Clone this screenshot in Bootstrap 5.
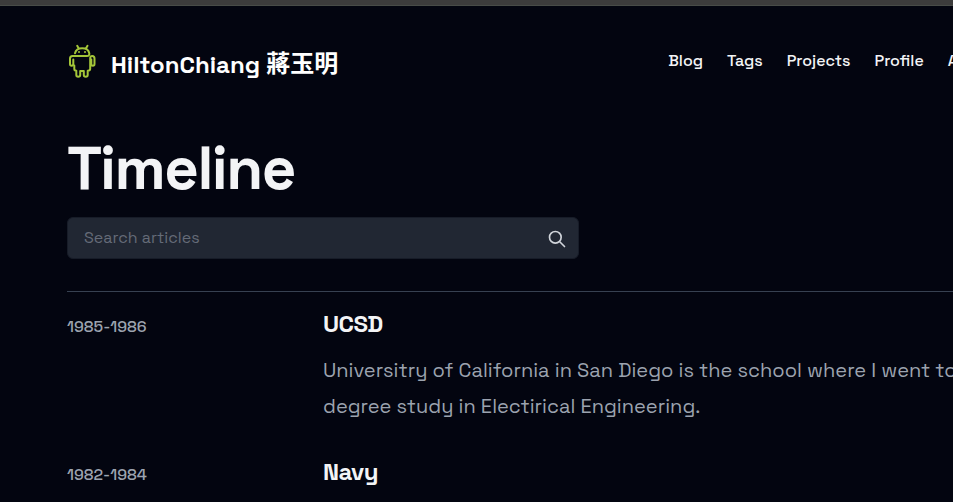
<!DOCTYPE html>
<html lang="en" data-bs-theme="dark">
<head>
<meta charset="utf-8">
<meta name="viewport" content="width=device-width, initial-scale=1">
<title>Timeline</title>
<link href="https://cdn.jsdelivr.net/npm/bootstrap@5.3.0/dist/css/bootstrap.min.css" rel="stylesheet">
<style>
html, body { height: 100%; }
body { background: #030510; color: #f3f4f6; font-family: "Space Grotesk", Inter, "Noto Sans CJK TC", sans-serif; overflow: hidden; }
.top-strip { height: 6px; background: #3c3c3c; border-bottom: 1px solid #484c48; }
.page { width: 1024px; margin-left: 67px; }
.site-header { height: 117px; }
.site-name { font-size: 24px; font-weight: 600; line-height: 32px; margin: 43px 0 0 15px; color: #fff; white-space: nowrap; width: 228px; }
.site-name .han { font-family: "Noto Sans CJK TC", sans-serif; font-size: 24px; font-weight: 700; line-height: 1; vertical-align: 1px; }
.bot { margin: 37px 0 0 1px; }
.site-nav { gap: 24px; margin: 43px 0 0 329.2px; }
.site-nav a { font-size: 16px; font-weight: 500; line-height: 24px; color: #f3f4f6; white-space: nowrap; }
.page-title { font-size: 60px; font-weight: 700; letter-spacing: -1.5px; line-height: 56px; margin: 18px 0 0; color: #f3f4f6; }
.search { width: 512px; height: 42px; margin-top: 20px; background: #212733; border: 1px solid #171c28; border-radius: 6px; padding: 0 11px 0 16px; }
.search input { background: none; border: 0; outline: 0; padding: 0; font-size: 16px; color: #f3f4f6; }
.search input::placeholder { color: #656b78; opacity: 1; }
.search svg { margin-top: 2px; }
.entries { border-top: 1px solid #374151; margin-top: 32px; }
.entry { height: 148px; padding-top: 16px; }
.entry-date { width: 256px; font-size: 16px; font-weight: 500; line-height: 24px; padding-top: 7px; color: #9ca3af; }
.entry-title { font-size: 24px; font-weight: 700; letter-spacing: -.6px; line-height: 32px; margin: 0 0 12px; color: #f3f4f6; }
.entry-text { font-size: 20px; line-height: 36px; color: #9ca3af; margin: 0; white-space: nowrap; }
</style>
</head>
<body>
<div class="top-strip"></div>
<div class="page">
  <header class="site-header d-flex align-items-start">
    <svg class="bot flex-shrink-0" width="28" height="36" viewBox="0 0 28 36" fill="none" stroke="#a4c639" stroke-width="2" stroke-linecap="round" stroke-linejoin="round">
      <path d="M9.200 2.800l1.300 2.200M19.500 2.800l-1.300 2.200M7 10.300C7.700 7 10.500 5.200 14.200 5.200s6.500 1.800 7.100 5.100c.2 1.700-.7 2.700-2.300 2.700H4.500c-1.600 0-2.500.9-2.500 2.500v5.500c0 2.400 3.300 2.400 3.300 0V16.500"/>
      <path d="M6.300 22.500v3.500c0 1.200.7 1.800 2 1.800V32c0 2.200 3.900 2.200 3.900 0V28h3.600v4c0 2.200 3.900 2.200 3.900 0v-4.200c1.700 0 2.500-.7 2.500-2V15c0-1.300.8-2 2-2 1.500 0 2.300.9 2.300 2.500V21c0 2.400-3.200 2.400-3.200 0v-4.500"/>
      <circle cx="11" cy="9" r="1" fill="#a4c639" stroke="none"/><circle cx="17" cy="9" r="1" fill="#a4c639" stroke="none"/>
    </svg>
    <div class="site-name">HiltonChiang <span class="han">蔣玉明</span></div>
    <nav class="site-nav d-flex">
      <a class="text-decoration-none" href="#">Blog</a>
      <a class="text-decoration-none" href="#">Tags</a>
      <a class="text-decoration-none" href="#">Projects</a>
      <a class="text-decoration-none" href="#">Profile</a>
      <a class="text-decoration-none" href="#">About</a>
    </nav>
  </header>
  <main>
    <h1 class="page-title">Timeline</h1>
    <div class="search d-flex align-items-center">
      <input class="flex-grow-1" type="text" placeholder="Search articles" aria-label="Search articles">
      <svg width="20" height="20" viewBox="0 0 24 24" fill="none" stroke="#d1d5db" stroke-width="2" stroke-linecap="round" stroke-linejoin="round"><path d="M21 21l-6-6m2-5a7 7 0 11-14 0 7 7 0 0114 0z"/></svg>
    </div>
    <div class="entries">
      <article class="entry d-flex">
        <div class="entry-date flex-shrink-0">1985-1986</div>
        <div>
          <h2 class="entry-title">UCSD</h2>
          <p class="entry-text">Universitry of California in San Diego is the school where I went to<br>degree study in Electirical Engineering.</p>
        </div>
      </article>
      <article class="entry d-flex">
        <div class="entry-date flex-shrink-0">1982-1984</div>
        <div><h2 class="entry-title">Navy</h2></div>
      </article>
    </div>
  </main>
</div>
<script src="https://cdn.jsdelivr.net/npm/bootstrap@5.3.0/dist/js/bootstrap.bundle.min.js"></script>
</body>
</html>
